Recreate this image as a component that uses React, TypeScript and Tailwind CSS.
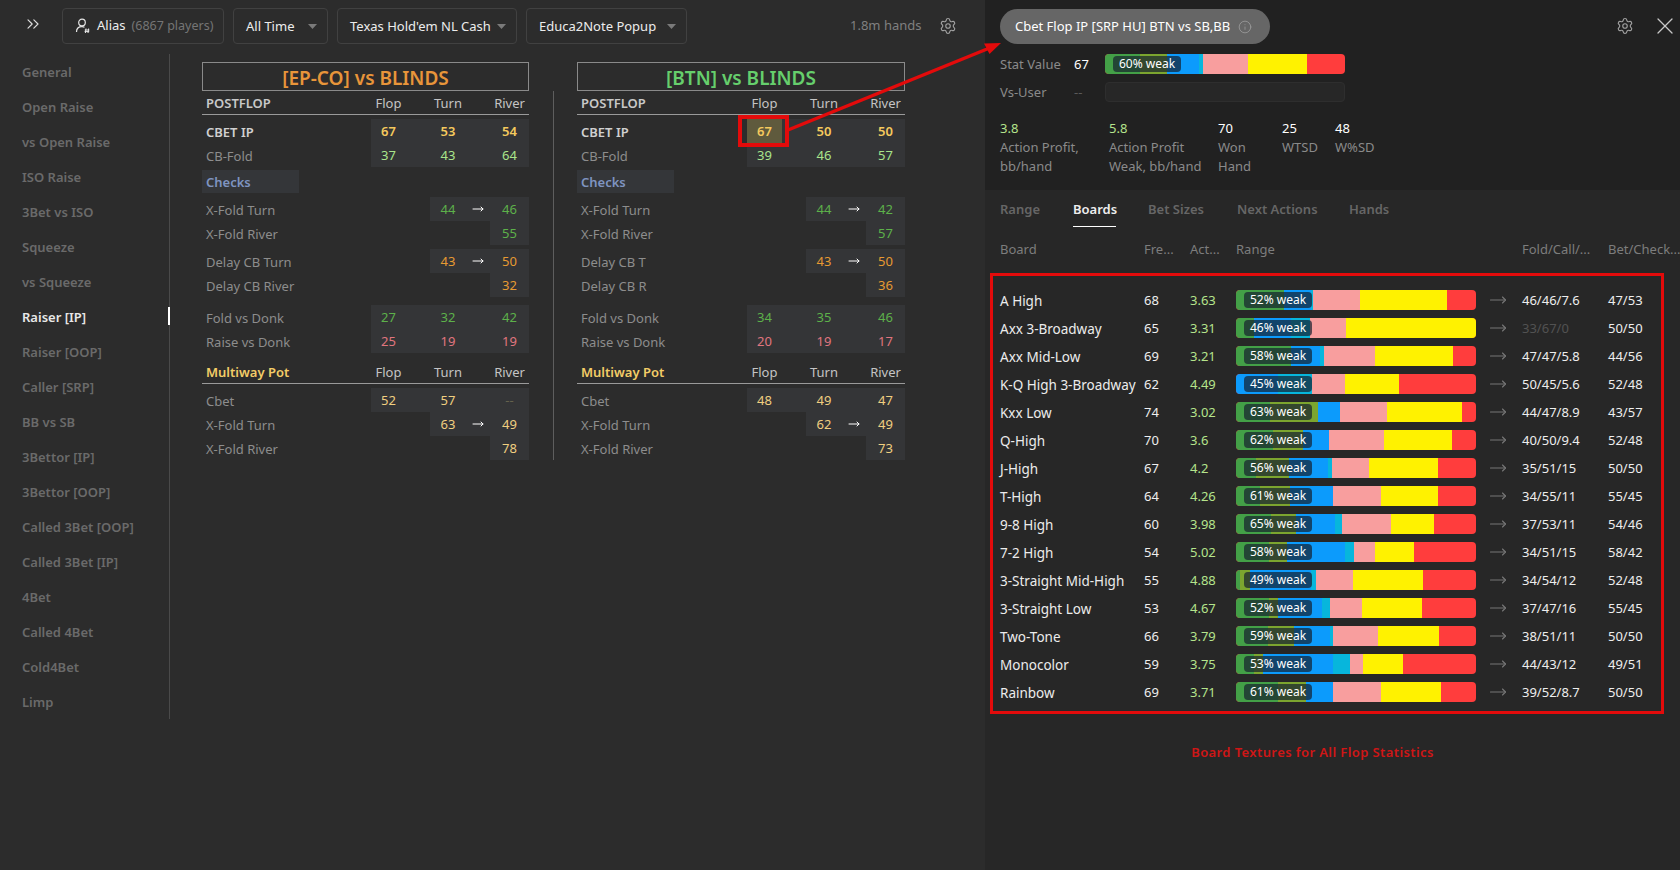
import React from 'react';
import { ChevronsRight, Info, MoveRight, Settings, X } from 'lucide-react';

const sideItems = ['General', 'Open Raise', 'vs Open Raise', 'ISO Raise', '3Bet vs ISO', 'Squeeze', 'vs Squeeze', 'Raiser [IP]', 'Raiser [OOP]', 'Caller [SRP]', 'BB vs SB', '3Bettor [IP]', '3Bettor [OOP]', 'Called 3Bet [OOP]', 'Called 3Bet [IP]', '4Bet', 'Called 4Bet', 'Cold4Bet', 'Limp'];

// segment end points along a 240px bar: green, olive, blue, cyan, pink, yellow (red fills the rest)
const barColors = ['#43a047', '#7ca52f', '#0c9bfc', '#07b6dc', '#f89e9e', '#fff200'];

const boards = [
  { name: 'A High', freq: '68', act: '3.63', weak: '52%', ends: [48, 48, 75, 77, 124, 211], fold: '46/46/7.6', bet: '47/53' },
  { name: 'Axx 3-Broadway', freq: '65', act: '3.31', weak: '46%', ends: [18, 18, 55, 74, 110, 240], fold: '33/67/0', bet: '50/50', dim: true },
  { name: 'Axx Mid-Low', freq: '69', act: '3.21', weak: '58%', ends: [55, 55, 84, 88, 139, 217], fold: '47/47/5.8', bet: '44/56' },
  { name: 'K-Q High 3-Broadway', freq: '62', act: '4.49', weak: '45%', ends: [0, 0, 42, 76, 109, 163], fold: '50/45/5.6', bet: '52/48' },
  { name: 'Kxx Low', freq: '74', act: '3.02', weak: '63%', ends: [34, 82, 104, 104, 151, 226], fold: '44/47/8.9', bet: '43/57' },
  { name: 'Q-High', freq: '70', act: '3.6', weak: '62%', ends: [37, 67, 93, 93, 148, 216], fold: '40/50/9.4', bet: '52/48' },
  { name: 'J-High', freq: '67', act: '4.2', weak: '56%', ends: [20, 53, 92, 96, 133, 202], fold: '35/51/15', bet: '50/50' },
  { name: 'T-High', freq: '64', act: '4.26', weak: '61%', ends: [24, 54, 97, 97, 145, 202], fold: '34/55/11', bet: '55/45' },
  { name: '9-8 High', freq: '60', act: '3.98', weak: '65%', ends: [35, 60, 99, 106, 155, 198], fold: '37/53/11', bet: '54/46' },
  { name: '7-2 High', freq: '54', act: '5.02', weak: '58%', ends: [33, 51, 109, 118, 139, 178], fold: '34/51/15', bet: '58/42' },
  { name: '3-Straight Mid-High', freq: '55', act: '4.88', weak: '49%', ends: [4, 14, 75, 80, 117, 187], fold: '34/54/12', bet: '52/48' },
  { name: '3-Straight Low', freq: '53', act: '4.67', weak: '52%', ends: [33, 42, 86, 94, 126, 186], fold: '37/47/16', bet: '55/45' },
  { name: 'Two-Tone', freq: '66', act: '3.79', weak: '59%', ends: [32, 58, 94, 97, 142, 203], fold: '38/51/11', bet: '50/50' },
  { name: 'Monocolor', freq: '59', act: '3.75', weak: '53%', ends: [18, 27, 97, 114, 127, 167], fold: '44/43/12', bet: '49/51' },
  { name: 'Rainbow', freq: '69', act: '3.71', weak: '61%', ends: [42, 70, 97, 97, 145, 205], fold: '39/52/8.7', bet: '50/50' },
];

function StackBar({ ends, weak }: { ends: number[]; weak: string }) {
  let prev = 0;
  return (
    <div className="relative flex h-5 w-60 overflow-hidden rounded-sm bg-[#ff3d3d]">
      {ends.map((end, i) => {
        const w = end - prev;
        prev = end;
        return <div key={i} className="h-full" style={{ width: w, backgroundColor: barColors[i] }} />;
      })}
      <div className="absolute left-2 top-[2px] flex h-4 w-[68px] items-center justify-center rounded-sm bg-[#16202e]/70 text-[12px] text-white">
        {weak} weak
      </div>
    </div>
  );
}

function Caret() {
  return (
    <svg width="9" height="5" viewBox="0 0 9 5" className="shrink-0">
      <path d="M0 0h9L4.5 5z" fill="#7a7a7a" />
    </svg>
  );
}

function Dropdown({ label, className }: { label: string; className: string }) {
  return (
    <div className={`flex h-9 items-center justify-between rounded border border-[#414141] pl-3 pr-2.5 text-[13px] text-[#ececec] ${className}`}>
      <span className="pt-px">{label}</span>
      <Caret />
    </div>
  );
}

type RowProps = {
  name: string;
  vals: (string | null)[];
  color: string;
  cols: string;
  bold?: boolean;
  arrow?: boolean;
  dimLast?: boolean;
  hot?: boolean;
};

function StatRow({ name, vals, color, cols, bold, arrow, dimLast, hot }: RowProps) {
  const [flop, turn, river] = vals;
  const cell = 'flex items-center justify-center pt-[2px]';
  const flopBg = hot ? 'bg-[#5f5a3d]' : flop ? 'bg-[#343537]' : '';
  return (
    <div className={`grid h-6 text-[13px] ${cols} ${bold ? 'font-semibold' : ''}`}>
      <div className={`flex items-center pl-1 pt-[3px] ${bold ? 'text-[#d0d0d0]' : 'text-[#8d8d8d]'}`}>{name}</div>
      <div className={`${cell} ${flopBg}`} style={{ color }}>{flop}</div>
      <div className={flop ? 'bg-[#343537]' : ''} />
      <div className={`${cell} ${turn ? 'bg-[#343537]' : ''}`} style={{ color }}>{turn}</div>
      <div className={`flex items-center justify-center ${turn ? 'bg-[#343537]' : ''} text-white`}>
        {arrow && <MoveRight size={12} strokeWidth={2} />}
      </div>
      <div className={`${cell} bg-[#343537] ${dimLast ? 'text-[#65624d]' : ''}`} style={dimLast ? undefined : { color }}>{river}</div>
    </div>
  );
}

function ColHead({ title, cols, gold }: { title: string; cols: string; gold?: boolean }) {
  return (
    <div className={`grid h-6 items-center border-b border-[#9a9a9a] pt-[2px] text-[13px] text-[#c4c4c4] ${cols}`}>
      <div className={`pl-1 font-semibold ${gold ? 'text-[#f3cc67]' : 'text-[#c8c8c8]'}`}>{title}</div>
      <div className="text-center">Flop</div>
      <div />
      <div className="text-center">Turn</div>
      <div />
      <div className="text-center">River</div>
    </div>
  );
}

function StatTable({ title, titleColor, data, delayT, delayR, cols, width }: { title: string; titleColor: string; data: any; delayT: string; delayR: string; cols: string; width: string }) {
  return (
    <div className={width}>
      <div className={`flex h-[29px] items-center justify-center border border-[#8a8a8a] pt-[3px] text-[19px] font-semibold ${titleColor}`}>{title}</div>
      <ColHead title="POSTFLOP" cols={cols} />
      <div className="mt-1">
        <StatRow cols={cols} name="CBET IP" vals={data.cbet} color="#f4c95d" bold hot={data.hot} />
        <StatRow cols={cols} name="CB-Fold" vals={data.cbFold} color="#a9e58b" />
      </div>
      <div className="mt-[3px] flex h-[23px] w-[97px] items-center bg-[#343639] pl-1 pt-[2px] text-[13px] font-semibold text-[#7f94c0]">Checks</div>
      <div className="mt-1">
        <StatRow cols={cols} name="X-Fold Turn" vals={[null, data.xTurn[0], data.xTurn[1]]} color="#5db14a" arrow />
        <StatRow cols={cols} name="X-Fold River" vals={[null, null, data.xRiver]} color="#5db14a" />
      </div>
      <div className="mt-1">
        <StatRow cols={cols} name={delayT} vals={[null, data.dTurn[0], data.dTurn[1]]} color="#e69a32" arrow />
        <StatRow cols={cols} name={delayR} vals={[null, null, data.dRiver]} color="#e69a32" />
      </div>
      <div className="mt-2">
        <StatRow cols={cols} name="Fold vs Donk" vals={data.fold} color="#5db14a" />
        <StatRow cols={cols} name="Raise vs Donk" vals={data.raise} color="#e0757f" />
      </div>
      <div className="h-[7px]" />
      <ColHead title="Multiway Pot" cols={cols} gold />
      <div className="mt-1">
        <StatRow cols={cols} name="Cbet" vals={data.mwCbet} color="#f0cf80" dimLast={data.mwCbet[2] === '--'} />
        <StatRow cols={cols} name="X-Fold Turn" vals={[null, data.mwTurn[0], data.mwTurn[1]]} color="#f0cf80" arrow />
        <StatRow cols={cols} name="X-Fold River" vals={[null, null, data.mwRiver]} color="#f0cf80" />
      </div>
    </div>
  );
}

const epco = { cbet: ['67', '53', '54'], cbFold: ['37', '43', '64'], xTurn: ['44', '46'], xRiver: '55', dTurn: ['43', '50'], dRiver: '32', fold: ['27', '32', '42'], raise: ['25', '19', '19'], mwCbet: ['52', '57', '--'], mwTurn: ['63', '49'], mwRiver: '78' };
const btn = { hot: true, cbet: ['67', '50', '50'], cbFold: ['39', '46', '57'], xTurn: ['44', '42'], xRiver: '57', dTurn: ['43', '50'], dRiver: '36', fold: ['34', '35', '46'], raise: ['20', '19', '17'], mwCbet: ['48', '49', '47'], mwTurn: ['62', '49'], mwRiver: '73' };

const profitStats = [
  { v: '3.8', l: ['Action Profit,', 'bb/hand'], c: 'text-[#b5e48c]', w: 'w-[109px]' },
  { v: '5.8', l: ['Action Profit', 'Weak, bb/hand'], c: 'text-[#b5e48c]', w: 'w-[109px]' },
  { v: '70', l: ['Won', 'Hand'], c: 'text-white', w: 'w-16' },
  { v: '25', l: ['WTSD'], c: 'text-white', w: 'w-[53px]' },
  { v: '48', l: ['W%SD'], c: 'text-white', w: 'w-[60px]' },
];

const boardCols = 'grid grid-cols-[144px_46px_46px_240px_46px_86px_60px] items-center';

export default function App() {
  return (
    <div className="relative flex h-[870px] w-[1680px] overflow-hidden bg-[#2c2c2c] font-['Noto_Sans',sans-serif] text-[13px]">
      {/* left side */}
      <div className="flex w-[985px] shrink-0 flex-col">
        <div className="flex h-[54px] items-center pb-[2px]">
          <div className="flex w-[62px] justify-center pb-1 pl-1 text-[#dddddd]">
            <ChevronsRight size={20} strokeWidth={1.4} />
          </div>
          <div className="flex h-9 w-[162px] items-center gap-1.5 rounded border border-[#414141] pl-3 text-[13px]">
            <svg width="16" height="16" viewBox="0 0 16 16" fill="none" stroke="#e6e6e6" strokeWidth="1.2">
              <circle cx="7" cy="4.5" r="3.3" />
              <path d="M1.5 14c0-3.4 2.4-5.3 5.5-5.3 1 0 1.8.2 2.5.5" />
              <path d="M11 10.5l-.6 4.5M13.6 10.5l-.6 4.5M9.8 12h4.6M9.6 13.6h4.6" strokeWidth="1" />
            </svg>
            <span className="text-[#eeeeee]">Alias</span>
            <span className="text-[12.5px] text-[#757575]">(6867 players)</span>
          </div>
          <Dropdown label="All Time" className="ml-[9px] w-[95px]" />
          <Dropdown label="Texas Hold'em NL Cash" className="ml-[9px] w-[180px]" />
          <Dropdown label="Educa2Note Popup" className="ml-[9px] w-[161px]" />
          <span className="ml-[163px] text-[13px] text-[#808080]">1.8m hands</span>
          <Settings size={18} strokeWidth={1.5} className="ml-[18px] text-[#a0a0a0]" />
        </div>
        <div className="flex">
          <div className="w-[170px] border-r border-[#4a4a4a]">
            {sideItems.map((s) => (
              <div key={s} className={`relative flex h-[35px] items-center pl-[22px] pt-[2px] text-[13px] font-semibold ${s === 'Raiser [IP]' ? 'text-[#e8e8e8]' : 'text-[#6a6a6a]'}`}>
                {s}
                {s === 'Raiser [IP]' && <div className="absolute -right-px top-2 h-[18px] w-[2px] bg-white" />}
              </div>
            ))}
          </div>
          <div className="flex items-start pl-8 pt-2">
            <StatTable title="[EP-CO] vs BLINDS" titleColor="text-[#e8953a]" data={epco} delayT="Delay CB Turn" delayR="Delay CB River" width="w-[327px]" cols="grid-cols-[169px_35px_24px_36px_24px_39px]" />
            <div className="ml-6 mr-[23px] mt-[29px] h-[369px] w-px bg-[#5e5e5e]" />
            <StatTable title="[BTN] vs BLINDS" titleColor="text-[#66cf6c]" data={btn} delayT="Delay CB T" delayR="Delay CB R" width="w-[328px]" cols="grid-cols-[170px_35px_24px_36px_24px_39px]" />
          </div>
        </div>
      </div>

      {/* right side */}
      <div className="flex min-w-0 flex-1 flex-col bg-[#272727]">
        <div className="h-[190px] bg-[#212121] pl-[15px]">
          <div className="flex items-start justify-between pt-[9px]">
            <div className="flex h-[35px] w-[270px] items-center gap-2 rounded-full bg-[#666666] pl-[15px] text-[13px] text-white">
              Cbet Flop IP [SRP HU] BTN vs SB,BB
              <Info size={14} strokeWidth={1.2} className="text-[#a5a5a5]" />
            </div>
            <div className="mr-px flex items-center gap-[17px] pt-[3px]">
              <Settings size={18} strokeWidth={1.5} className="text-[#a0a0a0]" />
              <X size={28} strokeWidth={1.1} className="text-[#c8c8c8]" />
            </div>
          </div>
          <div className="mt-[10px] flex h-5 items-center">
            <span className="w-[74px] pt-[2px] text-[#8a8a8a]">Stat Value</span>
            <span className="w-[31px] pt-[2px] text-white">67</span>
            <StackBar ends={[35, 62, 94, 98, 143, 202]} weak="60%" />
          </div>
          <div className="mt-2 flex h-5 items-center">
            <span className="w-[74px] pt-[2px] text-[#8a8a8a]">Vs-User</span>
            <span className="w-[31px] pt-[2px] text-[#5a5a5a]">--</span>
            <div className="h-5 w-60 rounded-sm border border-[#2e2e2e] bg-[#272727]" />
          </div>
          <div className="mt-[17px] flex">
            {profitStats.map((s) => (
              <div key={s.v} className={`${s.w} leading-[19px]`}>
                <div className={s.c}>{s.v}</div>
                {s.l.map((t) => (
                  <div key={t} className="text-[#8a8a8a]">{t}</div>
                ))}
              </div>
            ))}
          </div>
        </div>

        <div className="flex h-[37px] items-start pl-[15px] pt-[10px] text-[13px] font-semibold text-[#666666]">
          <span className="w-[73px]">Range</span>
          <span className="w-[75px] text-[#eeeeee]">
            <span className="inline-block h-[27px] w-[43px] border-b border-white">Boards</span>
          </span>
          <span className="w-[89px]">Bet Sizes</span>
          <span className="w-[112px]">Next Actions</span>
          <span>Hands</span>
        </div>

        <div className={`${boardCols} mt-[13px] h-5 pl-[15px] text-[13px] text-[#7d7d7d]`}>
          <span>Board</span>
          <span>Fre...</span>
          <span>Act...</span>
          <span>Range</span>
          <span />
          <span>Fold/Call/...</span>
          <span className="whitespace-nowrap">Bet/Check...</span>
        </div>

        <div className="ml-[5px] mt-[13px] w-[674px] border-[3px] border-[#e30b0b] pb-[5px] pl-[7px] pt-[10px]">
          {boards.map((b) => (
            <div key={b.name} className={`${boardCols} h-7 text-[13px]`}>
              <span className="whitespace-nowrap pt-[2px] text-[13.5px] text-[#ececec]">{b.name}</span>
              <span className="pt-[2px] text-[#eeeeee]">{b.freq}</span>
              <span className="pt-[2px] text-[#b5e48c]">{b.act}</span>
              <StackBar ends={b.ends} weak={b.weak} />
              <span className="pl-[13px] text-[#777777]"><MoveRight size={18} strokeWidth={1.5} /></span>
              <span className={`pt-[2px] ${b.dim ? 'text-[#525252]' : 'text-[#eeeeee]'}`}>{b.fold}</span>
              <span className="pt-[2px] text-[#eeeeee]">{b.bet}</span>
            </div>
          ))}
        </div>

        <div className="mt-[29px] pr-[40px] text-center text-[13px] font-semibold tracking-[0.4px] text-[#cf1616]">
          Board Textures for All Flop Statistics
        </div>
      </div>

      {/* red annotation over the highlighted cell */}
      <div className="absolute left-[738px] top-[115px] h-8 w-[51px] border-4 border-[#e30b0b]" />
      <svg className="pointer-events-none absolute left-0 top-0" width="1680" height="870">
        <path d="M788 130L992 47" stroke="#e30b0b" strokeWidth="3.5" fill="none" />
        <path d="M1001 43L984 43.5L989.5 54z" fill="#e30b0b" />
      </svg>
    </div>
  );
}
